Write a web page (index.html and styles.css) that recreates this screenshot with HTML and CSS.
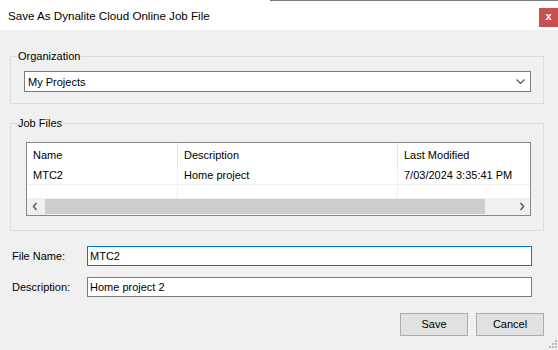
FILE: index.html
```html
<!DOCTYPE html>
<html>
<head>
    <meta charset="utf-8">
    <title>Save As Dynalite Cloud Online Job File</title>
    <link rel="stylesheet" href="styles.css">
</head>
<body>
    <div class="window">
        <div class="titlebar">
            <span class="title">Save As Dynalite Cloud Online Job File</span>
            <span class="close-btn">x</span>
        </div>

        <div class="content">
            <fieldset class="group group-org">
                <legend>Organization</legend>
                <div class="combo">
                    <span>My Projects</span>
                    <svg class="combo-arrow" width="9" height="6" viewBox="0 0 9 6">
                        <polyline points="0.5,0.5 4.5,4.5 8.5,0.5" fill="none" stroke="#555" stroke-width="1.2"/>
                    </svg>
                </div>
            </fieldset>

            <fieldset class="group group-files">
                <legend>Job Files</legend>
                <div class="listview">
                    <div class="lv-row lv-header">
                        <div class="col col-name">Name</div>
                        <div class="col col-desc">Description</div>
                        <div class="col col-date">Last Modified</div>
                    </div>
                    <div class="lv-row lv-item">
                        <div class="col col-name">MTC2</div>
                        <div class="col col-desc">Home project</div>
                        <div class="col col-date">7/03/2024 3:35:41 PM</div>
                    </div>
                    <div class="lv-row lv-empty">
                        <div class="col col-name"></div>
                        <div class="col col-desc"></div>
                        <div class="col col-date"></div>
                    </div>
                    <div class="hscroll">
                        <svg class="scroll-arrow" width="17" height="17" viewBox="0 0 17 17">
                            <polyline points="9.5,5 6.5,8.5 9.5,12" fill="none" stroke="#606060" stroke-width="1.6"/>
                        </svg>
                        <div class="track"><div class="thumb"></div></div>
                        <svg class="scroll-arrow" width="17" height="17" viewBox="0 0 17 17">
                            <polyline points="7.5,5 10.5,8.5 7.5,12" fill="none" stroke="#606060" stroke-width="1.6"/>
                        </svg>
                    </div>
                </div>
            </fieldset>

            <div class="form-row first">
                <label class="field-label">File Name:</label>
                <div class="textbox focused">MTC2</div>
            </div>
            <div class="form-row">
                <label class="field-label">Description:</label>
                <div class="textbox">Home project 2</div>
            </div>

            <div class="buttons">
                <span class="btn">Save</span>
                <span class="btn">Cancel</span>
            </div>
        </div>

        <svg class="size-grip" width="12" height="10" viewBox="0 0 12 10">
            <rect x="9" y="0" width="2" height="2" fill="#b8b8b8"/>
            <rect x="6" y="3" width="2" height="2" fill="#b8b8b8"/>
            <rect x="9" y="3" width="2" height="2" fill="#b8b8b8"/>
            <rect x="3" y="6" width="2" height="2" fill="#b8b8b8"/>
            <rect x="6" y="6" width="2" height="2" fill="#b8b8b8"/>
            <rect x="9" y="6" width="2" height="2" fill="#b8b8b8"/>
        </svg>
    </div>
</body>
</html>
```

FILE: styles.css
```css
body, html {
    margin: 0;
    padding: 0;
    font-family: "Liberation Sans", Arial, sans-serif;
    font-size: 11px;
    color: #000;
    background-color: #f0f0f0;
}

.window {
    position: relative;
    width: 558px;
    height: 350px;
    background-color: #f0f0f0;
    overflow: hidden;
}

/* 타이틀 바 */
.titlebar {
    position: relative;
    height: 30px;
    background-color: #fff;
    display: flex;
    align-items: flex-start;
}

.titlebar::before {
    content: "";
    position: absolute;
    top: 0;
    left: 270px;
    right: 0;
    height: 1px;
    background-color: #7a7a7a;
}

.title {
    margin: 8px 0 0 8px;
    font-size: 11.6px;
    line-height: 15px;
}

.close-btn {
    margin: 8px 0 0 auto;
    width: 19px;
    height: 19px;
    background-color: #c75050;
    color: #fff;
    font-weight: bold;
    font-size: 11px;
    line-height: 17px;
    text-align: center;
}

.content {
    padding: 19px 0 0 10px;
}

/* 그룹 박스 */
.group {
    box-sizing: border-box;
    margin: 0;
    padding: 0;
    width: 534px;
    min-width: 0;
    border: 1px solid #dcdcdc;
}

.group legend {
    margin-left: 6px;
    padding: 0 1px;
    line-height: 14px;
}

.group-files {
    margin-top: 12px;
}

.combo {
    height: 19px;
    margin: 8px 12px 11px 13px;
    border: 1px solid #7a7a7a;
    background-color: #fff;
    display: flex;
    align-items: center;
    padding-left: 3px;
}

.combo-arrow {
    margin-left: auto;
    margin-right: 5px;
}

/* 리스트 뷰 */
.listview {
    height: 72px;
    margin: 12px 12px 14px 15px;
    border: 1px solid #828790;
    background-color: #fff;
    display: flex;
    flex-direction: column;
    overflow: hidden;
}

.lv-row {
    display: flex;
    white-space: nowrap;
}

.col {
    flex: none;
    padding-left: 6px;
    box-sizing: border-box;
}

.col-name { width: 151px; }
.col-desc { width: 220px; }
.col-date { width: 160px; }

.lv-header {
    height: 24px;
}

.lv-header .col {
    height: 24px;
    line-height: 25px;
    border-right: 1px solid #e5e5e5;
}

.lv-item {
    height: 17px;
    line-height: 17px;
    border-bottom: 1px solid #f0f0f0;
}

.lv-empty {
    flex: 1;
}

.lv-empty .col,
.lv-item .col {
    border-right: 1px solid #f0f0f0;
}

.hscroll {
    flex: none;
    height: 17px;
    display: flex;
    background-color: #f0f0f0;
}

.scroll-arrow {
    flex: none;
}

.track {
    flex: 1;
    display: flex;
    align-items: center;
}

.thumb {
    width: 440px;
    height: 15px;
    margin-left: 1px;
    background-color: #cdcdcd;
}

/* 입력 필드 */
.form-row {
    display: flex;
    align-items: center;
    margin-top: 11px;
}

.form-row.first {
    margin-top: 15px;
}

.field-label {
    width: 75px;
    margin-left: 2px;
}

.textbox {
    width: 441px;
    height: 18px;
    line-height: 18px;
    padding-left: 2px;
    border: 1px solid #7a7a7a;
    background-color: #fff;
}

.textbox.focused {
    border-color: #0078d7;
}

.buttons {
    display: flex;
    justify-content: flex-end;
    gap: 8px;
    margin: 16px 14px 0 0;
}

.btn {
    width: 66px;
    height: 21px;
    line-height: 21px;
    text-align: center;
    border: 1px solid #adadad;
    background-color: #e1e1e1;
}

.size-grip {
    position: absolute;
    right: 0;
    bottom: 0;
}
```
